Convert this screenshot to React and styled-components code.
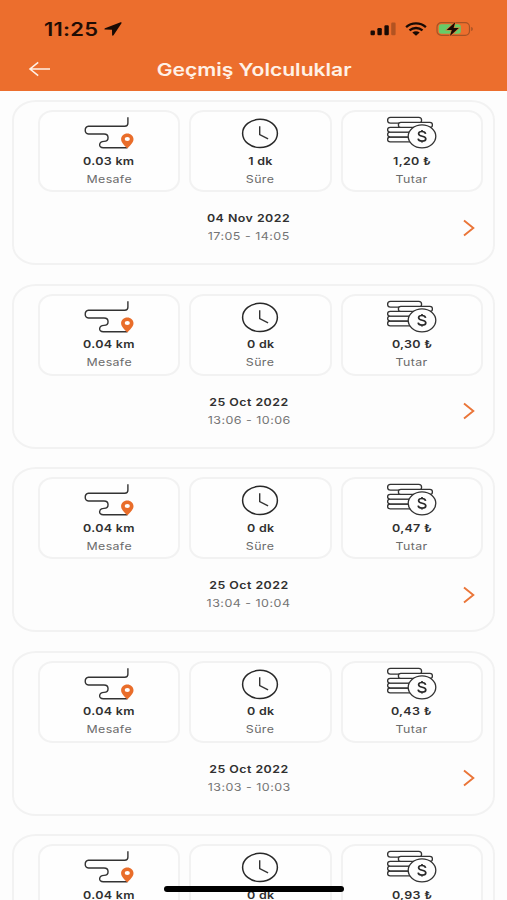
// App.jsx
import React from 'react';
import styled, { createGlobalStyle } from 'styled-components';

const GlobalStyle = createGlobalStyle`
  body {
    margin: 0;
    background: #FDFDFD;
    font-family: 'Inter', sans-serif;
  }
`;

const Screen = styled.div`
  position: relative;
  width: 507px;
  height: 900px;
  overflow: hidden;
  background: #FDFDFD;
`;

const Header = styled.header`
  height: 90.5px;
  box-sizing: border-box;
  padding-top: 16px;
  background: #EC6E2D;
`;

const StatusBar = styled.div`
  display: flex;
  align-items: center;
  justify-content: space-between;
  height: 25px;
  padding: 0 34px 0 44px;
`;

const StatusGroup = styled.div`
  display: flex;
  align-items: center;
  gap: ${({ $gap }) => $gap};
`;

const Clock = styled.span`
  width: 54px;
  padding-top: 2px;
  font-weight: 600;
  font-size: 18px;
  line-height: 25px;
  letter-spacing: 0.2px;
  color: #1E0D05;
  white-space: nowrap;
  transform: scaleX(1.22);
  transform-origin: left;
`;

const NavBar = styled.div`
  display: grid;
  grid-template-columns: 60px 1fr 60px;
  align-items: center;
  height: 56px;
`;

const BackButton = styled.button`
  display: flex;
  padding: 0 0 0 28px;
  border: none;
  background: none;
`;

const PageTitle = styled.h1`
  margin: 0;
  padding: 1px 0 0 1px;
  font-weight: 600;
  font-size: 17.5px;
  line-height: 24px;
  text-align: center;
  color: #FFF1E6;
  white-space: nowrap;
  transform: scaleX(1.205);
`;

const TripList = styled.main`
  display: flex;
  flex-direction: column;
  gap: 18.6px;
  padding: 9.5px 12px 0;
`;

const Card = styled.article`
  flex: none;
  height: 165px;
  box-sizing: border-box;
  padding: 8px 10px 0 24px;
  border: 2px solid #F2F2F2;
  border-radius: 24px / 20px;
`;

const Stats = styled.div`
  display: grid;
  grid-template-columns: repeat(3, 1fr);
  gap: 9px;
`;

const Stat = styled.div`
  display: flex;
  flex-direction: column;
  align-items: center;
  height: 82px;
  box-sizing: border-box;
  padding-top: 3px;
  border: 2px solid #F2F2F2;
  border-radius: 15px / 13px;
  background: #FEFEFE;
`;

const StatValue = styled.span`
  margin-top: 2.6px;
  font-weight: 600;
  font-size: 10.6px;
  line-height: 16px;
  letter-spacing: 0.25px;
  color: #303030;
  white-space: nowrap;
  transform: scaleX(1.18);
`;

const StatLabel = styled.span`
  margin-top: 2px;
  font-size: 10.5px;
  line-height: 16px;
  letter-spacing: 0.3px;
  color: #6A6A6A;
  transform: scaleX(1.18);
`;

const TripRow = styled.div`
  display: grid;
  grid-template-columns: 30px 1fr 30px;
  align-items: center;
  padding: 18px 8px 0 0;
`;

const TripDate = styled.div`
  grid-column: 2;
  display: flex;
  flex-direction: column;
  align-items: center;
  gap: 2px;
  padding: 1px 15px 0 0;
`;

const DateText = styled.span`
  font-weight: 600;
  font-size: 10.6px;
  line-height: 16px;
  letter-spacing: 0.4px;
  color: #303030;
  transform: scaleX(1.17);
`;

const TimeText = styled.span`
  font-size: 10.6px;
  line-height: 16px;
  letter-spacing: 0.4px;
  color: #747474;
  transform: scaleX(1.18);
`;

const DetailButton = styled.button`
  display: flex;
  justify-content: flex-end;
  padding: 0;
  border: none;
  background: none;
`;

const HomeIndicator = styled.div`
  position: absolute;
  left: 164px;
  bottom: 8.5px;
  width: 180px;
  height: 5.5px;
  border-radius: 3px;
  background: #000000;
`;

const LocationIcon = () => (
  <svg width="18" height="14" viewBox="0 0 18 14">
    <path d="M16.6.3 1 6.2c-.9.4-.7 1.4.2 1.4l6.8.1.1 5.2c0 1 1.1 1.1 1.6.2L17.5 1.2c.3-.6-.2-1.1-.9-.9Z" fill="#180A04" />
  </svg>
);

const SignalIcon = () => (
  <svg width="26" height="14" viewBox="0 0 26 14">
    <g fill="#180A04">
      <rect x="0.5" y="8.5" width="4.4" height="4.7" rx="1.2" />
      <rect x="7.4" y="6.1" width="4.4" height="7.1" rx="1.2" />
      <rect x="14.4" y="3.2" width="4.4" height="10" rx="1.2" />
      <rect x="21.2" y="0.5" width="4.4" height="12.7" rx="1.2" opacity="0.27" />
    </g>
  </svg>
);

const WifiIcon = () => (
  <svg width="22" height="14" viewBox="0 0 22 14">
    <g fill="none" stroke="#180A04" strokeWidth="2.3">
      <path d="M1.1 5.2C6.7.2 15.3.2 20.9 5.2" />
      <path d="M4.5 8.4c3.8-3.2 9.2-3.2 13 0" />
    </g>
    <path d="M7.3 10.6c2.2-1.7 5.2-1.7 7.4 0L11 13.7Z" fill="#180A04" />
  </svg>
);

const BatteryIcon = () => (
  <svg width="37" height="16" viewBox="0 0 37 16">
    <rect x="1" y="1.7" width="32.5" height="12.6" rx="4.3" fill="none" stroke="#A65325" strokeWidth="1.2" />
    <path d="M35.2 6v4c1.2-.3 1.6-1.1 1.6-2s-.4-1.7-1.6-2Z" fill="#A65325" />
    <rect x="2.8" y="3.3" width="22" height="9.4" rx="2.6" fill="#67CB68" />
    <path d="M19.3.9 10.7 9h5.1l-1.9 6.1L22.8 7h-5.2Z" fill="#180A04" stroke="#EC6E2D" strokeWidth="1.2" paintOrder="stroke" />
  </svg>
);

const BackIcon = () => (
  <svg width="24" height="16" viewBox="0 0 24 16">
    <path d="M22 8H2M10.2 1.3 2 8l8.2 6.7" fill="none" stroke="#FFF1E6" strokeWidth="1.6" />
  </svg>
);

const RouteIcon = () => (
  <svg width="52" height="36" viewBox="83.5 115 52 36">
    <path
      d="M128.4 117.3v6q0 3-3.2 3H89a3.9 3.9 0 0 0 0 7.7h15.5c5.4 0 5.4 7.4 0 7.4-5.4 0-6 6.4-.7 6.4h24"
      fill="none"
      stroke="#333333"
      strokeWidth="1.4"
    />
    <path d="M127.8 148.6c-1.6-2.3-6.2-5.6-6.2-9.4 0-3.1 2.7-5.6 6.2-5.6s6.2 2.5 6.2 5.6c0 3.8-4.6 7.1-6.2 9.4Z" fill="#E96D2A" />
    <ellipse cx="127.8" cy="139" rx="2.6" ry="2.1" fill="#FFFFFF" />
  </svg>
);

const DurationIcon = () => (
  <svg width="38" height="36" viewBox="241.5 115 38 36">
    <ellipse cx="260.5" cy="133.4" rx="17.4" ry="14.1" fill="none" stroke="#292929" strokeWidth="1.5" />
    <path d="M260.2 126.3v8.3l8.4 4.2" fill="none" stroke="#333333" strokeWidth="1.4" />
  </svg>
);

const CoinsIcon = () => (
  <svg width="52" height="36" viewBox="386 115 52 36">
    <g fill="#FEFEFE" stroke="#333333" strokeWidth="1.3">
      <rect x="387.6" y="137" width="38" height="4.8" rx="2.6" />
      <rect x="387.6" y="132.2" width="38" height="4.8" rx="2.6" />
      <rect x="387.6" y="127.4" width="38" height="4.8" rx="2.6" />
      <rect x="387.6" y="117.4" width="34" height="5.8" rx="2.9" />
      <rect x="398.4" y="122.3" width="34" height="5.1" rx="2.5" />
      <ellipse cx="422" cy="136.3" rx="13.8" ry="11.5" />
    </g>
    <path
      d="M425.6 133.8c-.3-1.5-1.6-2.3-3.6-2.3s-3.4.9-3.4 2.3c0 3.4 7.2 1.5 7.2 4.9 0 1.5-1.5 2.4-3.8 2.4-2.2 0-3.6-.9-3.9-2.5M422 130v1.6M422 141v1.6"
      fill="none"
      stroke="#292929"
      strokeWidth="1.7"
    />
  </svg>
);

const ChevronIcon = () => (
  <svg width="12" height="18" viewBox="0 0 12 18">
    <path d="M1 1.5 10.3 9 1 16.5" fill="none" stroke="#EA7538" strokeWidth="1.9" />
  </svg>
);

const trips = [
  { distance: '0.03', duration: 1, price: '1,20', date: '04 Nov 2022', time: '17:05 - 14:05' },
  { distance: '0.04', duration: 0, price: '0,30', date: '25 Oct 2022', time: '13:06 - 10:06' },
  { distance: '0.04', duration: 0, price: '0,47', date: '25 Oct 2022', time: '13:04 - 10:04' },
  { distance: '0.04', duration: 0, price: '0,43', date: '25 Oct 2022', time: '13:03 - 10:03' },
  { distance: '0.04', duration: 0, price: '0,93' },
];

function TripCard({ distance, duration, price, date, time }) {
  return (
    <Card>
      <Stats>
        <Stat>
          <RouteIcon />
          <StatValue>{distance} km</StatValue>
          {date && <StatLabel>Mesafe</StatLabel>}
        </Stat>
        <Stat>
          <DurationIcon />
          <StatValue>{duration} dk</StatValue>
          {date && <StatLabel>Süre</StatLabel>}
        </Stat>
        <Stat>
          <CoinsIcon />
          <StatValue>{price} ₺</StatValue>
          {date && <StatLabel>Tutar</StatLabel>}
        </Stat>
      </Stats>
      {date && (
        <TripRow>
          <TripDate>
            <DateText>{date}</DateText>
            <TimeText>{time}</TimeText>
          </TripDate>
          <DetailButton>
            <ChevronIcon />
          </DetailButton>
        </TripRow>
      )}
    </Card>
  );
}

export default function App() {
  return (
    <Screen>
      <GlobalStyle />
      <Header>
        <StatusBar>
          <StatusGroup $gap="6px">
            <Clock>11:25</Clock>
            <LocationIcon />
          </StatusGroup>
          <StatusGroup $gap="9px">
            <SignalIcon />
            <WifiIcon />
            <BatteryIcon />
          </StatusGroup>
        </StatusBar>
        <NavBar>
          <BackButton>
            <BackIcon />
          </BackButton>
          <PageTitle>Geçmiş Yolculuklar</PageTitle>
        </NavBar>
      </Header>
      <TripList>
        {trips.map((trip, index) => (
          <TripCard key={index} {...trip} />
        ))}
      </TripList>
      <HomeIndicator />
    </Screen>
  );
}
